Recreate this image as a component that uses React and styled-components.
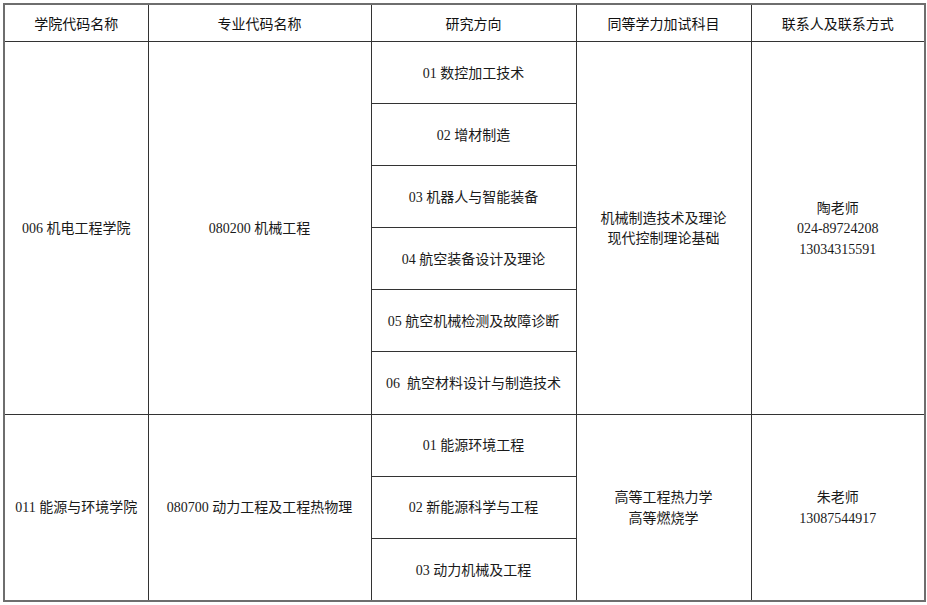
import React from 'react';
import styled, { createGlobalStyle } from 'styled-components';

const GlobalStyle = createGlobalStyle`
  html, body {
    margin: 0;
    padding: 0;
    background: #ffffff;
  }
  body {
    padding: 3px 0 0 3px;
  }
`;

const columns = [144, 223, 205, 175, 174];

const headers = ['学院代码名称', '专业代码名称', '研究方向', '同等学力加试科目', '联系人及联系方式'];

const groups = [
  {
    college: '006 机电工程学院',
    major: '080200 机械工程',
    directions: [
      '01 数控加工技术',
      '02 增材制造',
      '03 机器人与智能装备',
      '04 航空装备设计及理论',
      '05 航空机械检测及故障诊断',
      '06  航空材料设计与制造技术',
    ],
    subjects: ['机械制造技术及理论', '现代控制理论基础'],
    contact: ['陶老师', '024-89724208', '13034315591'],
  },
  {
    college: '011 能源与环境学院',
    major: '080700 动力工程及工程热物理',
    directions: ['01 能源环境工程', '02 新能源科学与工程', '03 动力机械及工程'],
    subjects: ['高等工程热力学', '高等燃烧学'],
    contact: ['朱老师', '13087544917'],
  },
];

const Table = styled.table`
  border-collapse: collapse;
  table-layout: fixed;
  width: 922px;
  border: 2px solid #6e6e6e;
  font-family: 'Liberation Serif', 'Noto Sans CJK SC', serif;
  font-size: 14px;
  color: #1a1a1a;
`;

const HeadCell = styled.th`
  height: 36px;
  padding: 0;
  border: 1px solid #333;
  font-family: 'Noto Sans CJK SC', sans-serif;
  font-weight: normal;
  font-size: 14px;
  color: #111;
  text-align: center;
  vertical-align: middle;
`;

const Cell = styled.td`
  height: ${(p) => (p.$span ? 'auto' : '58.1px')};
  padding: 3px 4px 0;
  border: 1px solid #333;
  text-align: center;
  vertical-align: middle;
  line-height: 20.5px;
`;

const Line = styled.div`
  white-space: pre;
`;

const Stack = ({ lines }) => lines.map((l) => <Line key={l}>{l}</Line>);

const App = () => (
  <>
    <GlobalStyle />
    <Table>
      <colgroup>
        {columns.map((w, i) => (
          <col key={i} style={{ width: w }} />
        ))}
      </colgroup>
      <thead>
        <tr>
          {headers.map((h) => (
            <HeadCell key={h}>{h}</HeadCell>
          ))}
        </tr>
      </thead>
      <tbody>
        {groups.map((g) =>
          g.directions.map((d, i) => (
            <tr key={g.college + d}>
              {i === 0 && (
                <>
                  <Cell $span rowSpan={g.directions.length}>{g.college}</Cell>
                  <Cell $span rowSpan={g.directions.length}>{g.major}</Cell>
                </>
              )}
              <Cell>
                <Line>{d}</Line>
              </Cell>
              {i === 0 && (
                <>
                  <Cell $span rowSpan={g.directions.length}>
                    <Stack lines={g.subjects} />
                  </Cell>
                  <Cell $span rowSpan={g.directions.length}>
                    <Stack lines={g.contact} />
                  </Cell>
                </>
              )}
            </tr>
          ))
        )}
      </tbody>
    </Table>
  </>
);

export default App;
